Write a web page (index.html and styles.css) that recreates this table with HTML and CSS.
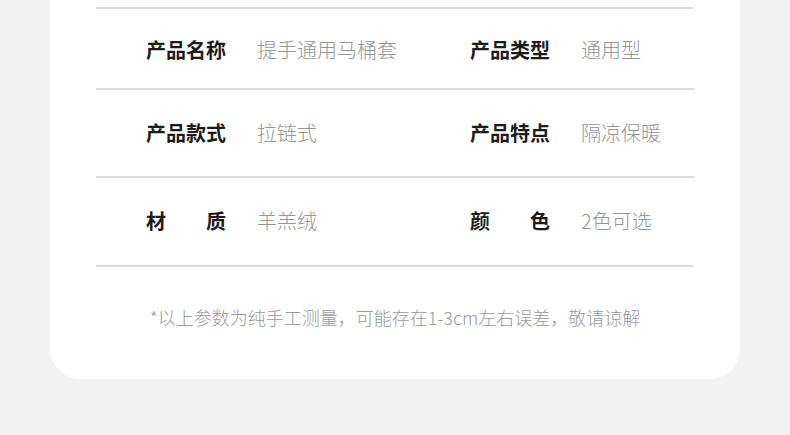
FILE: index.html
```html
<!DOCTYPE html>
<html lang="zh-CN">
<head>
<meta charset="utf-8">
<link rel="stylesheet" href="styles.css">
</head>
<body>
<div class="card">
  <div class="table">
    <div class="row row-1">
      <div class="label">产品名称</div>
      <div class="value">提手通用马桶套</div>
      <div class="label">产品类型</div>
      <div class="value">通用型</div>
    </div>
    <div class="row row-2">
      <div class="label">产品款式</div>
      <div class="value">拉链式</div>
      <div class="label">产品特点</div>
      <div class="value">隔凉保暖</div>
    </div>
    <div class="row row-3">
      <div class="label spread"><span>材</span><span>质</span></div>
      <div class="value">羊羔绒</div>
      <div class="label spread"><span>颜</span><span>色</span></div>
      <div class="value">2色可选</div>
    </div>
  </div>
  <p class="note">*以上参数为纯手工测量，可能存在1-3cm左右误差，敬请谅解</p>
</div>
</body>
</html>
```

FILE: styles.css
```css
html, body {
  margin: 0;
  padding: 0;
}
body {
  background: #f2f2f2;
  width: 790px;
  height: 435px;
  overflow: hidden;
  font-family: "Noto Sans CJK SC", "Noto Sans", sans-serif;
}
.card {
  margin: 0 50px;
  width: 690px;
  box-sizing: border-box;
  height: 379px;
  background: #fff;
  border-radius: 0 0 30px 30px;
  padding: 7px 46px 0;
}
.table {
  border-top: 2px solid #dcdcdc;
}
.row {
  display: grid;
  grid-template-columns: 50px 111px 213px 111px 1fr;
  align-items: center;
  border-bottom: 2px solid #dcdcdc;
  box-sizing: border-box;
}
.row-1 { height: 81px; padding-top: 3px; }
.row-2 { height: 88px; padding-bottom: 1px; }
.row-3 { height: 89px; padding-bottom: 2px; }
.label {
  width: 80px;
  font-size: 20px;
  line-height: 24px;
  font-weight: 700;
  color: #1c1c1c;
  white-space: nowrap;
}
.row .label:first-child {
  grid-column: 2;
}
.spread {
  display: flex;
  justify-content: space-between;
}
.value {
  font-size: 20px;
  line-height: 24px;
  font-weight: 300;
  color: #959595;
  white-space: nowrap;
}
.note {
  margin: 39px 0 0;
  text-align: center;
  font-size: 18px;
  line-height: 22px;
  font-weight: 300;
  color: #999;
  white-space: nowrap;
}
```
